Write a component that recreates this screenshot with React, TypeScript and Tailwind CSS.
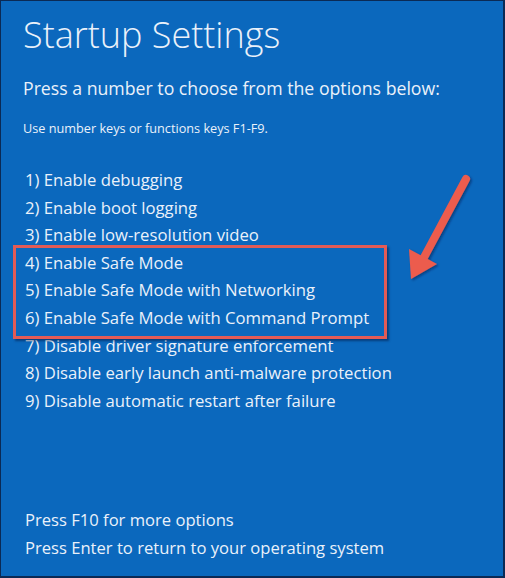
import React from "react";

const options = [
  "1) Enable debugging",
  "2) Enable boot logging",
  "3) Enable low-resolution video",
  "4) Enable Safe Mode",
  "5) Enable Safe Mode with Networking",
  "6) Enable Safe Mode with Command Prompt",
  "7) Disable driver signature enforcement",
  "8) Disable early launch anti-malware protection",
  "9) Disable automatic restart after failure",
];

export default function App() {
  return (
    <div
      className="relative flex h-[578px] w-[505px] flex-col overflow-hidden border-t border-l border-r-2 border-b-2 border-[#0b2a55] bg-[#0b68bd] text-[#eaf1fa]"
      style={{ fontFamily: '"Open Sans", "Noto Sans", sans-serif' }}
    >
      {/* Header */}
      <div className="pl-[22px] pt-[12px]">
        <h1 className="text-[36px] font-light leading-[44px]">Startup Settings</h1>
        <p className="mt-[17px] text-[17.7px] leading-[28px]">
          Press a number to choose from the options below:
        </p>
        <p className="mt-[16px] text-[12.7px] leading-[20px]">
          Use number keys or functions keys F1-F9.
        </p>
      </div>

      {/* Options */}
      <ul className="mt-[28px] pl-[24px]">
        {options.map((o) => (
          <li key={o} className="text-[16.7px] leading-[27.6px]">
            {o}
          </li>
        ))}
      </ul>

      {/* Footer */}
      <div className="mt-auto pb-[14px] pl-[24px]">
        <p className="text-[16.6px] leading-[28px]">Press F10 for more options</p>
        <p className="text-[16.6px] leading-[28px]">Press Enter to return to your operating system</p>
      </div>

      {/* Highlight box */}
      <div className="absolute left-[12px] top-[244px] h-[94px] w-[374px] border-[3px] border-[#e35b56] shadow-[2px_2px_2px_rgba(0,20,60,0.5)]" />

      {/* Arrow */}
      <svg className="absolute left-[398px] top-[168px]" width="80" height="120" viewBox="0 0 80 120">
        <defs>
          <filter id="sh" x="-20%" y="-20%" width="140%" height="140%">
            <feDropShadow dx="1.5" dy="1.5" stdDeviation="1" floodColor="#00143c" floodOpacity="0.5" />
          </filter>
        </defs>
        <g filter="url(#sh)">
          <line x1="67" y1="10" x2="22" y2="94" stroke="#ec5b4e" strokeWidth="8" strokeLinecap="round" />
          <polygon points="10,80 12,110 38,95" fill="#ec5b4e" />
        </g>
      </svg>
    </div>
  );
}
